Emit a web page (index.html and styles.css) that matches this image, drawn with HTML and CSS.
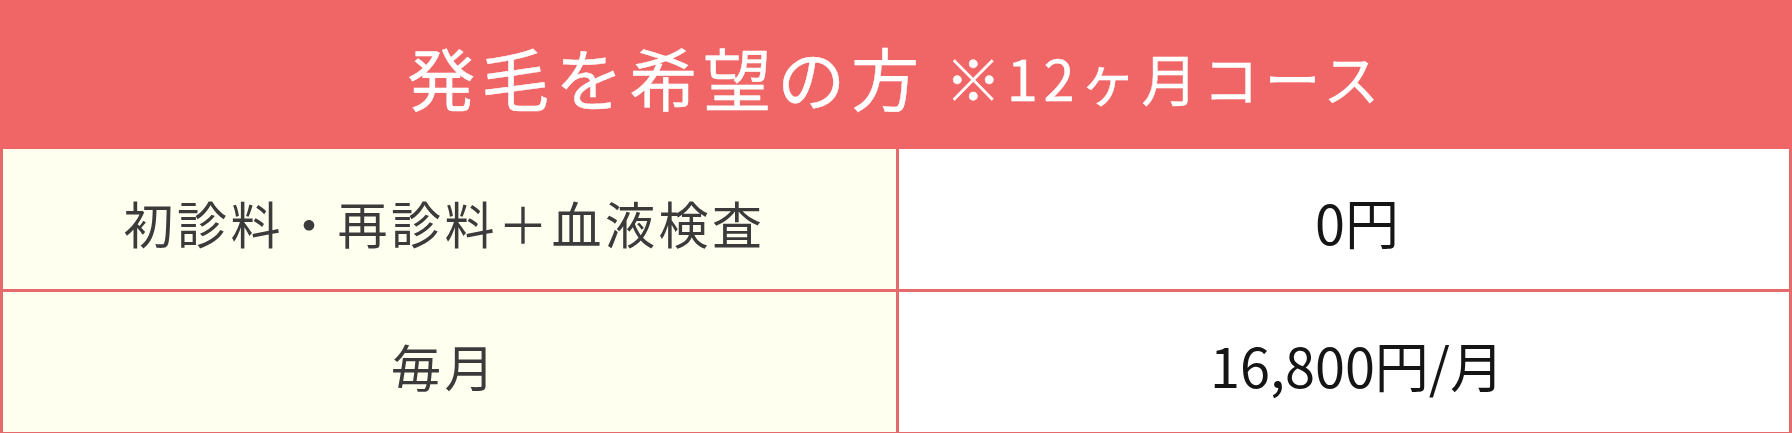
FILE: index.html
```html
<!DOCTYPE html>
<html lang="ja">
<head>
<meta charset="utf-8">
<title>発毛を希望の方</title>
<link rel="stylesheet" href="styles.css">
</head>
<body>
<div class="price-table">
  <div class="head">
    <span class="head-main">発毛を希望の方</span><span class="head-sub">※12ヶ月コース</span>
  </div>
  <div class="row">
    <div class="cell label">初診料・再診料＋血液検査</div>
    <div class="cell value">0円</div>
  </div>
  <div class="row">
    <div class="cell label">毎月</div>
    <div class="cell value">16,800円/月</div>
  </div>
</div>
</body>
</html>
```
FILE: styles.css
```css
html, body {
  margin: 0;
  padding: 0;
  background: #ffffff;
}
body {
  font-family: "Noto Sans CJK JP", "Noto Sans", sans-serif;
}
.price-table {
  width: 1792px;
  box-sizing: border-box;
  border-left: 3px solid #e56a6b;
  border-right: 3px solid #e56a6b;
}
.head {
  height: 149px;
  margin: 0 -3px;
  background: #f06566;
  color: #ffffff;
  font-weight: 400;
  -webkit-text-stroke: 0.4px #ffffff;
  display: flex;
  align-items: center;
  justify-content: center;
  padding-top: 5px;
  box-sizing: border-box;
}
.head-main {
  font-size: 68px;
  letter-spacing: 6px;
  line-height: 1;
}
.head-sub {
  font-size: 56px;
  letter-spacing: 5.5px;
  line-height: 1;
  margin-left: 20px;
}
.row {
  display: grid;
  grid-template-columns: 896px 1fr;
}
.cell {
  box-sizing: content-box;
  border-bottom: 3px solid #e56a6b;
  display: flex;
  align-items: center;
  justify-content: center;
  line-height: 1;
  padding-top: 5px;
  height: 135px;
}
.label {
  background: #fffff0;
  color: #3b3b3b;
  font-size: 50px;
  letter-spacing: 3.5px;
  border-right: 3px solid #e56a6b;
  padding-right: 10px;
}
.value {
  background: #ffffff;
  color: #151515;
  font-size: 54px;
  padding-left: 26px;
}
```
